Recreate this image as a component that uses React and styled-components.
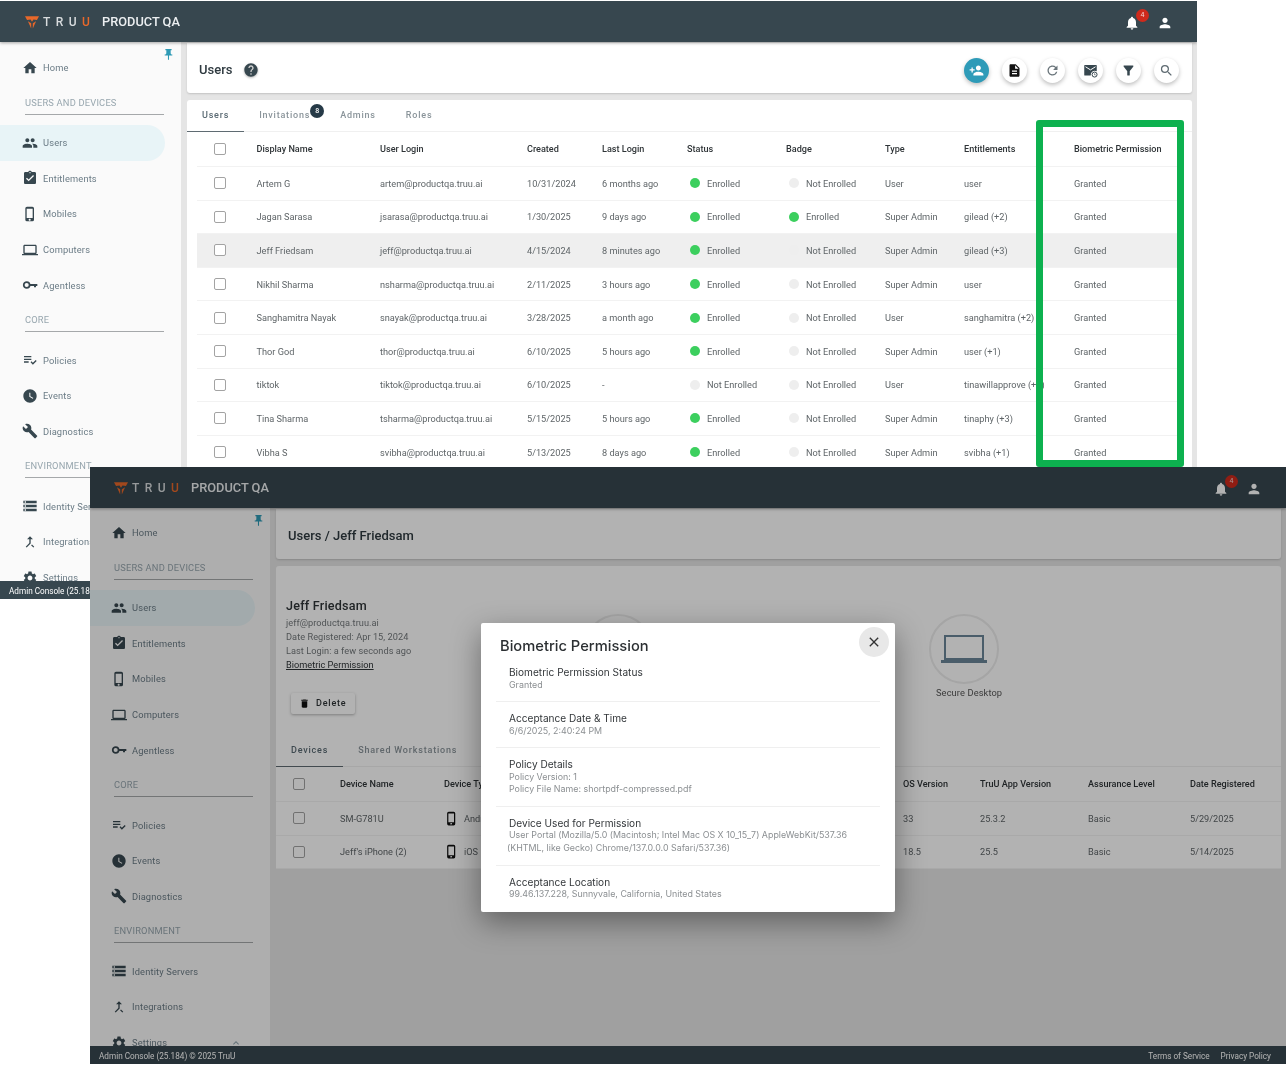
import React from "react";
import styled, { createGlobalStyle } from "styled-components";
import {
  MdHome,
  MdPeople,
  MdAssignmentTurnedIn,
  MdOutlinePhoneIphone,
  MdLaptop,
  MdPlaylistAddCheck,
  MdWatchLater,
  MdBuild,
  MdStorage,
  MdCallMerge,
  MdSettings,
  MdPushPin,
  MdHelp,
  MdPersonAdd,
  MdDescription,
  MdRefresh,
  MdFilterAlt,
  MdSearch,
  MdNotifications,
  MdPerson,
  MdClose,
  MdDelete,
  MdExpandLess,
} from "react-icons/md";

const GlobalStyle = createGlobalStyle`
  html, body {
    margin: 0;
    padding: 0;
    background: #fff;
    font-family: Roboto, "Liberation Sans", sans-serif;
  }
`;

/* free canvas: two app windows pasted over each other */
const Canvas = styled.div`
  position: relative;
  width: 1288px;
  height: 1066px;
  overflow: hidden;
  background: #fff;
  filter: blur(0.4px);
`;

const Window = styled.div`
  position: absolute;
  isolation: isolate;
  left: ${(p) => p.$left}px;
  top: ${(p) => p.$top}px;
  width: ${(p) => p.$width}px;
  height: ${(p) => p.$height}px;
  display: flex;
  flex-direction: column;
  overflow: hidden;
  background: #e5e5e5;
`;

const Header = styled.header`
  position: relative;
  z-index: 2;
  flex: 0 0 41px;
  display: flex;
  align-items: center;
  padding: 0 24px 0 ${(p) => p.$gutter}px;
  background: #37474f;
  box-shadow: 0 1px 3px rgba(0, 0, 0, 0.35);
`;

const LogoMark = styled.svg`
  width: 14px;
  height: 14px;
  margin-right: 4px;
`;

const LogoWord = styled.span`
  width: 59px;
  font-size: 12px;
  font-weight: 500;
  letter-spacing: 5.4px;
  color: #d8dcde;
  span {
    color: #e8682a;
  }
`;

const Product = styled.span`
  font-size: 12.8px;
  font-weight: 500;
  color: #eceff1;
`;

const HeaderIcons = styled.div`
  margin-left: auto;
  display: flex;
  align-items: center;
  gap: 17px;
  color: #fff;
  font-size: 16px;
  padding-top: 3px;
  svg {
    display: block;
  }
`;

const Bell = styled.div`
  position: relative;
`;

const BellBadge = styled.span`
  position: absolute;
  left: 12px;
  top: -6px;
  width: 13px;
  height: 13px;
  border-radius: 50%;
  background: #cf2a1c;
  color: #f4d6d2;
  font-size: 7px;
  line-height: 13px;
  text-align: center;
`;

const Body = styled.div`
  flex: 1;
  min-height: 0;
  display: flex;
`;

const Side = styled.aside`
  position: relative;
  flex: 0 0 ${(p) => p.$width}px;
  padding-top: ${(p) => p.$top}px;
  background: #fafafa;
  overflow: hidden;
`;

const Pin = styled(MdPushPin)`
  position: absolute;
  left: 162px;
  top: 6px;
  font-size: 13px;
  color: #2e9ab5;
`;

const NavItem = styled.div`
  display: flex;
  align-items: center;
  height: 35.6px;
  width: 165px;
  box-sizing: border-box;
  padding: 0 13px 0 ${(p) => p.$gutter - 3}px;
  border-radius: 0 18px 18px 0;
  background: ${(p) => (p.$active ? "#e8f4f7" : "transparent")};
  color: #6a7b85;
  font-size: 9.3px;
  letter-spacing: 0.15px;
  svg {
    flex: 0 0 16px;
    font-size: 16px;
    margin-right: 5px;
    color: #37474f;
  }
  svg.chevron {
    margin: 0 0 0 auto;
    flex: 0 0 12px;
    font-size: 12px;
    color: #90a4ae;
  }
`;

const NavSection = styled.div`
  box-sizing: border-box;
  height: 29px;
  margin: 0 17px 10.4px ${(p) => p.$gutter}px;
  padding-top: 11px;
  line-height: 12px;
  border-bottom: 1px solid #a5a8aa;
  font-size: 9.3px;
  letter-spacing: 0.2px;
  color: #97a6ae;
  white-space: nowrap;
`;

const Main = styled.main`
  flex: 1;
  min-width: 0;
  padding: 1px 5px 0 6px;
  display: flex;
  flex-direction: column;
  gap: 7px;
`;

const TitleBar = styled.div`
  flex: 0 0 50px;
  box-sizing: border-box;
  display: flex;
  align-items: center;
  padding: 4px 13.5px 0 12px;
  background: #fff;
  border-radius: 0 0 3px 3px;
  box-shadow: 0 1px 2px rgba(0, 0, 0, 0.15);
`;

const PageTitle = styled.h1`
  margin: 0 0 1px;
  font-size: 13px;
  font-weight: 500;
  color: #2f3a40;
`;

const HelpIcon = styled(MdHelp)`
  margin-left: 11px;
  font-size: 16px;
  color: #37474f;
  filter: drop-shadow(0 1px 1px rgba(0, 0, 0, 0.3));
`;

const Actions = styled.div`
  margin-left: auto;
  display: flex;
  gap: 13px;
`;

const RoundButton = styled.button`
  width: 25px;
  height: 25px;
  padding: 0;
  border: none;
  border-radius: 50%;
  display: flex;
  align-items: center;
  justify-content: center;
  font-size: 15px;
  background: ${(p) => (p.$primary ? "#2e9bb8" : "#fff")};
  color: ${(p) => (p.$primary ? "#fff" : p.$tone || "#37474f")};
  box-shadow: 0 2px 4px rgba(0, 0, 0, 0.25);
`;

const Panel = styled.section`
  flex: ${(p) => (p.$fit ? "0 0 auto" : "1")};
  min-height: 0;
  display: flex;
  flex-direction: column;
  background: #fff;
  border-radius: 3px 3px 0 0;
  overflow: hidden;
`;

const Tabs = styled.div`
  flex: 0 0 31px;
  display: flex;
  border-bottom: 1px solid #f0f0f0;
`;

const Tab = styled.div`
  position: relative;
  display: flex;
  align-items: center;
  margin-bottom: -1px;
  padding: 0 15px 1px;
  font-size: 9px;
  font-weight: 500;
  letter-spacing: 0.8px;
  color: ${(p) => (p.$active ? "#5a6a73" : "#8a949a")};
  border-bottom: 1px solid ${(p) => (p.$active ? "#5f6b72" : "transparent")};
`;

const TabBadge = styled.span`
  position: absolute;
  right: 1px;
  top: 4px;
  width: 14px;
  height: 14px;
  border-radius: 50%;
  background: #263a47;
  color: #fff;
  font-size: 7px;
  letter-spacing: 0;
  line-height: 14px;
  text-align: center;
`;

const Table = styled.div`
  margin: 0 ${(p) => p.$inset}px;
`;

const Row = styled.div`
  display: grid;
  grid-template-columns: ${(p) => p.$cols};
  align-items: center;
  height: ${(p) => (p.$head ? 35 : 33.6)}px;
  box-sizing: border-box;
  border-bottom: 1px solid #f2f2f2;
  background: ${(p) => (p.$hover ? "#efefef" : "transparent")};
  font-size: 9.2px;
  color: #5f6568;
  white-space: nowrap;
`;

const HeadCell = styled.div`
  font-size: 9.1px;
  font-weight: 500;
  color: #2f3437;
`;

const Check = styled.span`
  display: block;
  width: 12px;
  height: 12px;
  box-sizing: border-box;
  margin-left: ${(p) => p.$left}px;
  border: 1px solid #a3a3a3;
  border-radius: 2px;
  background: #fff;
`;

const Dot = styled.span`
  display: inline-block;
  width: 10px;
  height: 10px;
  margin: 0 7px 0 3px;
  vertical-align: -1.5px;
  border-radius: 50%;
  background: ${(p) => (p.$on ? "#3ccf5e" : "#eeeeee")};
`;

const GreenFrame = styled.div`
  position: absolute;
  left: 1036px;
  top: 120px;
  width: 148px;
  height: 347px;
  box-sizing: border-box;
  border: 7px solid #0db14f;
  border-radius: 3px;
`;

const Footer = styled.footer`
  position: relative;
  z-index: 2;
  flex: 0 0 18px;
  box-sizing: border-box;
  display: flex;
  align-items: center;
  justify-content: space-between;
  padding: 2px 15px 0 9px;
  background: #37474f;
  color: #fff;
  font-size: 8.2px;
  white-space: nowrap;
`;

const FooterLinks = styled.div`
  display: flex;
  gap: 11px;
`;

const Profile = styled.div`
  display: flex;
  flex: 0 0 169px;
  box-sizing: border-box;
  padding: 33px 0 0 10px;
`;

const ProfileInfo = styled.div`
  flex: 0 0 297px;
`;

const ProfileName = styled.div`
  font-size: 12.6px;
  font-weight: 500;
  line-height: 14px;
  color: #2f3437;
  letter-spacing: 0.2px;
  margin-bottom: 3px;
`;

const ProfileLine = styled.div`
  font-size: 9.2px;
  line-height: 14px;
  color: #74797c;
  letter-spacing: 0.05px;
`;

const ProfileLink = styled(ProfileLine)`
  color: #2f3437;
  letter-spacing: 0;
  text-decoration: underline;
`;

const DeleteButton = styled.button`
  display: flex;
  align-items: center;
  gap: 6px;
  height: 21px;
  width: 64px;
  margin: 20.5px 0 0 5px;
  padding: 0 0 0 8px;
  border: none;
  border-radius: 2px;
  background: #fff;
  color: #2f3437;
  font-family: inherit;
  font-size: 9px;
  font-weight: 500;
  letter-spacing: 0.8px;
  box-shadow: 0 1px 3px rgba(0, 0, 0, 0.3);
  svg {
    font-size: 11px;
    color: #111;
  }
`;

const Tiles = styled.div`
  display: flex;
  gap: 276px;
  padding-top: 15px;
`;

const Tile = styled.div`
  width: 70px;
`;

const TileRing = styled.div`
  width: 70px;
  height: 70px;
  box-sizing: border-box;
  border: 2.5px solid #ececec;
  border-radius: 50%;
  display: flex;
  align-items: center;
  justify-content: center;
  color: #6b8698;
`;

const TileLabel = styled.div`
  margin: 3px 0 0 7px;
  font-size: 9.3px;
  line-height: 12px;
  letter-spacing: 0.1px;
  color: #555;
  white-space: nowrap;
`;

const DeviceType = styled.div`
  display: flex;
  align-items: center;
  gap: 5px;
  svg {
    font-size: 15px;
    color: #111;
  }
`;

const Overlay = styled.div`
  position: absolute;
  inset: 0;
  z-index: 3;
  background: rgba(0, 0, 0, 0.3);
`;

const Modal = styled.div`
  position: absolute;
  z-index: 4;
  left: 391px;
  top: 156px;
  width: 414px;
  height: 289px;
  box-sizing: border-box;
  padding: 13px 15px 0;
  border-radius: 2px;
  background: #fff;
  box-shadow: 0 10px 30px rgba(0, 0, 0, 0.4);
  font-family: Inter, Roboto, sans-serif;
`;

const ModalTitle = styled.h2`
  margin: 0 0 0 4px;
  padding-top: 1px;
  font-size: 14.7px;
  font-weight: 500;
  line-height: 19px;
  color: #2b2f32;
`;

const CloseButton = styled.button`
  position: absolute;
  left: 378px;
  top: 4px;
  width: 30px;
  height: 30px;
  padding: 0;
  border: none;
  border-radius: 50%;
  display: flex;
  align-items: center;
  justify-content: center;
  background: #e8e8e8;
  color: #333;
  font-size: 16px;
`;

const Detail = styled.div`
  padding: 10px 0 10px 13px;
  border-bottom: 1px solid #efefef;
  &:last-child {
    border-bottom: none;
  }
`;

const DetailLabel = styled.div`
  font-size: 10.1px;
  line-height: 12.5px;
  color: #33373a;
`;

const DetailValue = styled.div`
  font-size: 8.9px;
  line-height: 12.6px;
  color: #8b8f92;
  white-space: nowrap;
`;

const Hanging = styled.span`
  margin-left: -2px;
`;

const TruuLogo = () => (
  <LogoMark viewBox="0 0 24 24" fill="#e8682a">
    <polygon points="0,2 24,2 20.5,8.5 14.5,7.5 12,11.5 9.5,7.5 3.5,8.5" />
    <polygon points="5,10.5 10.6,14 10.6,23" />
    <polygon points="19,10.5 13.4,14 13.4,23" />
  </LogoMark>
);

const MailClock = () => (
  <svg width="15" height="15" viewBox="0 0 24 24" fill="#37474f">
    <path d="M3 3h18a1 1 0 0 1 1 1v9.2a6.5 6.5 0 0 0-9.6 6.8H3a1 1 0 0 1-1-1V4a1 1 0 0 1 1-1z" />
    <path d="M4 6l8 5 8-5" fill="none" stroke="#fff" strokeWidth="1.6" />
    <circle cx="18.5" cy="18.5" r="4" fill="none" stroke="#37474f" strokeWidth="1.6" />
    <path d="M18.5 16.5v2.4h1.8" fill="none" stroke="#37474f" strokeWidth="1" />
  </svg>
);

// the plain laptop of the tile, thinner than the md icon
const ThinLaptop = () => (
  <svg width="46" height="28" viewBox="0 0 46 28">
    <rect x="4" y="1" width="38" height="23" fill="none" stroke="currentColor" strokeWidth="2" />
    <rect x="0" y="25" width="46" height="3" fill="currentColor" />
  </svg>
);

// ring and shaft, md key icons have a different bow
const KeyIcon = () => (
  <svg viewBox="0 0 24 24" width="1em" height="1em" fill="currentColor">
    <circle cx="7" cy="12" r="4.4" fill="none" stroke="currentColor" strokeWidth="2.6" />
    <path d="M12 10.6h11v2.8h-2v1.8h-3v-1.8h-6z" />
  </svg>
);

const navGroups = [
  { items: [{ label: "Home", icon: MdHome }] },
  {
    title: "USERS AND DEVICES",
    items: [
      { label: "Users", icon: MdPeople, active: true },
      { label: "Entitlements", icon: MdAssignmentTurnedIn },
      { label: "Mobiles", icon: MdOutlinePhoneIphone },
      { label: "Computers", icon: MdLaptop },
      { label: "Agentless", icon: KeyIcon },
    ],
  },
  {
    title: "CORE",
    items: [
      { label: "Policies", icon: MdPlaylistAddCheck },
      { label: "Events", icon: MdWatchLater },
      { label: "Diagnostics", icon: MdBuild },
    ],
  },
  {
    title: "ENVIRONMENT",
    items: [
      { label: "Identity Servers", icon: MdStorage },
      { label: "Integrations", icon: MdCallMerge },
      { label: "Settings", icon: MdSettings, chevron: true },
    ],
  },
];

const AppWindow = ({ left, top, width, height, sidebar, sideTop, gutter, footerLinks, children }) => (
  <Window $left={left} $top={top} $width={width} $height={height}>
    <Header $gutter={gutter}>
      <TruuLogo />
      <LogoWord>
        TRU<span>U</span>
      </LogoWord>
      <Product>PRODUCT QA</Product>
      <HeaderIcons>
        <Bell>
          <MdNotifications />
          <BellBadge>4</BellBadge>
        </Bell>
        <MdPerson />
      </HeaderIcons>
    </Header>
    <Body>
      <Side $width={sidebar} $top={sideTop}>
        <Pin />
        {navGroups.map((group, i) => (
          <div key={i}>
            {group.title && <NavSection $gutter={gutter}>{group.title}</NavSection>}
            {group.items.map(({ label, icon: Icon, active, chevron }) => (
              <NavItem key={label} $active={active} $gutter={gutter}>
                <Icon />
                {label}
                {chevron && <MdExpandLess className="chevron" />}
              </NavItem>
            ))}
          </div>
        ))}
      </Side>
      <Main>{children}</Main>
    </Body>
    <Footer>
      <span>Admin Console (25.184) © 2025 TruU</span>
      {footerLinks && (
        <FooterLinks>
          <span>Terms of Service</span>
          <span>Privacy Policy</span>
        </FooterLinks>
      )}
    </Footer>
  </Window>
);

const userCols = "59.5px 123.5px 147px 75px 85px 99px 99px 79px 110px 1fr";

const users = [
  ["Artem G", "artem@productqa.truu.ai", "10/31/2024", "6 months ago", true, false, "User", "user"],
  ["Jagan Sarasa", "jsarasa@productqa.truu.ai", "1/30/2025", "9 days ago", true, true, "Super Admin", "gilead (+2)"],
  ["Jeff Friedsam", "jeff@productqa.truu.ai", "4/15/2024", "8 minutes ago", true, false, "Super Admin", "gilead (+3)"],
  ["Nikhil Sharma", "nsharma@productqa.truu.ai", "2/11/2025", "3 hours ago", true, false, "Super Admin", "user"],
  ["Sanghamitra Nayak", "snayak@productqa.truu.ai", "3/28/2025", "a month ago", true, false, "User", "sanghamitra (+2)"],
  ["Thor God", "thor@productqa.truu.ai", "6/10/2025", "5 hours ago", true, false, "Super Admin", "user (+1)"],
  ["tiktok", "tiktok@productqa.truu.ai", "6/10/2025", "-", false, false, "User", "tinawillapprove (+1)"],
  ["Tina Sharma", "tsharma@productqa.truu.ai", "5/15/2025", "5 hours ago", true, false, "Super Admin", "tinaphy (+3)"],
  ["Vibha S", "svibha@productqa.truu.ai", "5/13/2025", "8 days ago", true, false, "Super Admin", "svibha (+1)"],
];

const Enrollment = ({ on }) => (
  <div>
    <Dot $on={on} />
    {on ? "Enrolled" : "Not Enrolled"}
  </div>
);

const UsersPage = () => (
  <>
    <TitleBar>
      <PageTitle>Users</PageTitle>
      <HelpIcon />
      <Actions>
        <RoundButton $primary>
          <MdPersonAdd />
        </RoundButton>
        <RoundButton $tone="#111">
          <MdDescription />
        </RoundButton>
        <RoundButton $tone="#6a757b">
          <MdRefresh />
        </RoundButton>
        <RoundButton>
          <MailClock />
        </RoundButton>
        <RoundButton>
          <MdFilterAlt />
        </RoundButton>
        <RoundButton $tone="#5f6b72">
          <MdSearch />
        </RoundButton>
      </Actions>
    </TitleBar>
    <Panel>
      <Tabs>
        <Tab $active>Users</Tab>
        <Tab>
          Invitations
          <TabBadge>8</TabBadge>
        </Tab>
        <Tab>Admins</Tab>
        <Tab>Roles</Tab>
      </Tabs>
      <Table $inset={10}>
        <Row $cols={userCols} $head>
          <Check $left={17} />
          <HeadCell>Display Name</HeadCell>
          <HeadCell>User Login</HeadCell>
          <HeadCell>Created</HeadCell>
          <HeadCell>Last Login</HeadCell>
          <HeadCell>Status</HeadCell>
          <HeadCell>Badge</HeadCell>
          <HeadCell>Type</HeadCell>
          <HeadCell>Entitlements</HeadCell>
          <HeadCell>Biometric Permission</HeadCell>
        </Row>
        {users.map(([name, login, created, last, status, badge, type, ent], i) => (
          <Row key={login} $cols={userCols} $hover={i === 2}>
            <Check $left={17} />
            <div>{name}</div>
            <div>{login}</div>
            <div>{created}</div>
            <div>{last}</div>
            <Enrollment on={status} />
            <Enrollment on={badge} />
            <div>{type}</div>
            <div>{ent}</div>
            <div>Granted</div>
          </Row>
        ))}
      </Table>
    </Panel>
  </>
);

const deviceCols = "64px 104px 459px 77px 108px 102px 1fr";

const devices = [
  ["SM-G781U", "Android", "33", "25.3.2", "5/29/2025"],
  ["Jeff's iPhone (2)", "iOS", "18.5", "25.5", "5/14/2025"],
];

const details = [
  ["Biometric Permission Status", ["Granted"]],
  ["Acceptance Date & Time", ["6/6/2025, 2:40:24 PM"]],
  ["Policy Details", ["Policy Version: 1", "Policy File Name: shortpdf-compressed.pdf"]],
  [
    "Device Used for Permission",
    [
      "User Portal (Mozilla/5.0 (Macintosh; Intel Mac OS X 10_15_7) AppleWebKit/537.36",
      <Hanging key="ua">(KHTML, like Gecko) Chrome/137.0.0.0 Safari/537.36)</Hanging>,
    ],
  ],
  ["Acceptance Location", ["99.46.137.228, Sunnyvale, California, United States"]],
];

const DetailPage = () => (
  <>
    <TitleBar>
      <PageTitle>Users / Jeff Friedsam</PageTitle>
    </TitleBar>
    <Panel $fit>
      <Profile>
        <ProfileInfo>
          <ProfileName>Jeff Friedsam</ProfileName>
          <ProfileLine>jeff@productqa.truu.ai</ProfileLine>
          <ProfileLine>Date Registered: Apr 15, 2024</ProfileLine>
          <ProfileLine>Last Login: a few seconds ago</ProfileLine>
          <ProfileLink>Biometric Permission</ProfileLink>
          <DeleteButton>
            <MdDelete />
            Delete
          </DeleteButton>
        </ProfileInfo>
        <Tiles>
          <Tile>
            <TileRing>
              <MdOutlinePhoneIphone size={40} />
            </TileRing>
            <TileLabel>Secure Mobile</TileLabel>
          </Tile>
          <Tile>
            <TileRing>
              <ThinLaptop />
            </TileRing>
            <TileLabel>Secure Desktop</TileLabel>
          </Tile>
        </Tiles>
      </Profile>
      <Tabs>
        <Tab $active>Devices</Tab>
        <Tab>Shared Workstations</Tab>
      </Tabs>
      <Table $inset={0}>
        <Row $cols={deviceCols} $head>
          <Check $left={17} />
          <HeadCell>Device Name</HeadCell>
          <HeadCell>Device Type</HeadCell>
          <HeadCell>OS Version</HeadCell>
          <HeadCell>TruU App Version</HeadCell>
          <HeadCell>Assurance Level</HeadCell>
          <HeadCell>Date Registered</HeadCell>
        </Row>
        {devices.map(([name, type, os, app, date]) => (
          <Row key={name} $cols={deviceCols}>
            <Check $left={17} />
            <div>{name}</div>
            <DeviceType>
              <MdOutlinePhoneIphone />
              {type}
            </DeviceType>
            <div>{os}</div>
            <div>{app}</div>
            <div>Basic</div>
            <div>{date}</div>
          </Row>
        ))}
      </Table>
    </Panel>
  </>
);

const App = () => (
  <Canvas>
    <GlobalStyle />
    <AppWindow left={0} top={1} width={1197} height={598} sidebar={181} sideTop={8} gutter={25}>
      <UsersPage />
    </AppWindow>
    <GreenFrame />
    <AppWindow left={90} top={467} width={1196} height={597} sidebar={180} sideTop={7} gutter={24} footerLinks>
      <DetailPage />
      <Overlay />
      <Modal>
        <ModalTitle>Biometric Permission</ModalTitle>
        <CloseButton>
          <MdClose />
        </CloseButton>
        {details.map(([label, values]) => (
          <Detail key={label}>
            <DetailLabel>{label}</DetailLabel>
            {values.map((value, i) => (
              <DetailValue key={i}>{value}</DetailValue>
            ))}
          </Detail>
        ))}
      </Modal>
    </AppWindow>
  </Canvas>
);

export default App;
